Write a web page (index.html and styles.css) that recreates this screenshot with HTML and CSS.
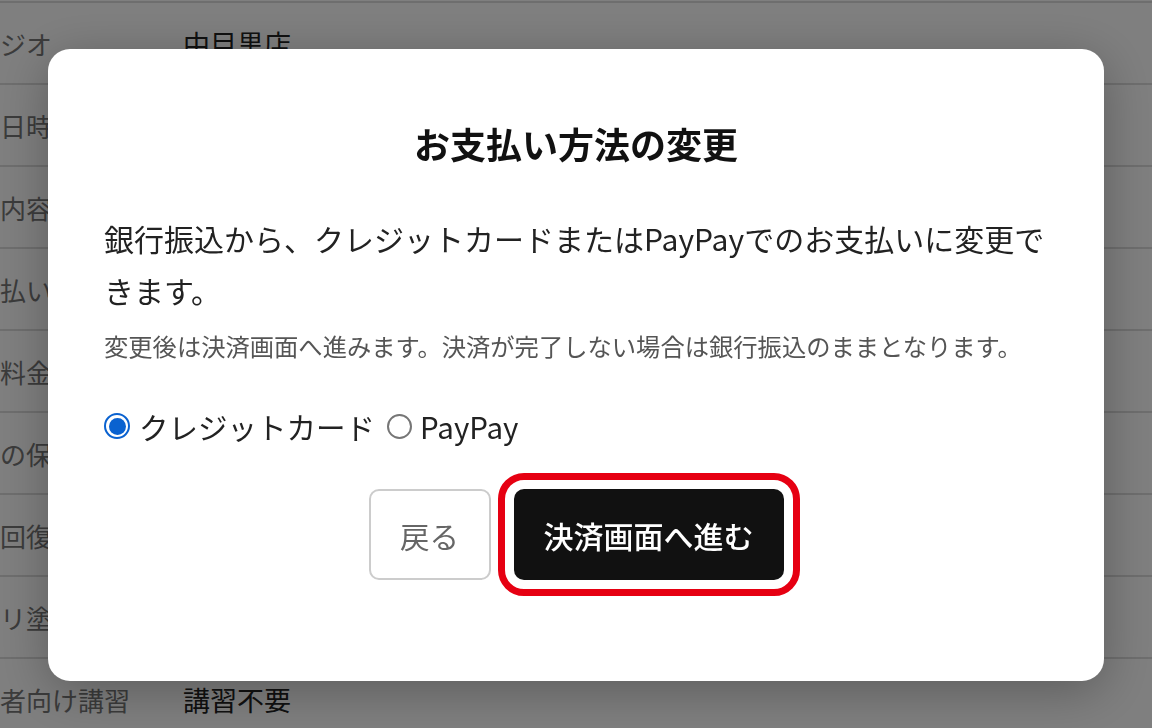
FILE: index.html
```html
<!DOCTYPE html>
<html lang="ja">
<head>
<meta charset="utf-8">
<title>お支払い方法の変更</title>
<link rel="stylesheet" href="styles.css">
</head>
<body>
<div class="page">
  <div class="rows">
    <div class="row"><span class="label">ジオ</span><span class="value">中目黒店</span></div>
    <div class="row"><span class="label">日時</span><span class="value"></span></div>
    <div class="row"><span class="label">内容</span><span class="value"></span></div>
    <div class="row"><span class="label">払い</span><span class="value"></span></div>
    <div class="row"><span class="label">料金</span><span class="value"></span></div>
    <div class="row"><span class="label">の保</span><span class="value"></span></div>
    <div class="row"><span class="label">回復</span><span class="value"></span></div>
    <div class="row"><span class="label">リ塗</span><span class="value"></span></div>
    <div class="row"><span class="label">者向け講習</span><span class="value">講習不要</span></div>
  </div>
</div>

<div class="overlay">
  <div class="modal">
    <h2 class="title">お支払い方法の変更</h2>
    <p class="lead">銀行振込から、クレジットカードまたはPayPayでのお支払いに変更できます。</p>
    <p class="note">変更後は決済画面へ進みます。決済が完了しない場合は銀行振込のままとなります。</p>
    <div class="options">
      <label class="option"><span class="radio checked"></span><span class="opt-text">クレジットカード</span></label>
      <label class="option"><span class="radio"></span><span class="opt-text">PayPay</span></label>
    </div>
    <div class="actions">
      <button class="btn btn-back">戻る</button>
      <button class="btn btn-primary">決済画面へ進む</button>
    </div>
  </div>
</div>
</body>
</html>
```

FILE: styles.css
```css
html, body {
  margin: 0;
  padding: 0;
  background: #ffffff;
  font-family: "Noto Sans CJK JP", "Noto Sans", sans-serif;
  overflow: hidden;
  height: 728px;
}

.page {
  width: 1152px;
  height: 728px;
}

.rows {
  padding-top: 1px;
}

.row {
  display: grid;
  grid-template-columns: 183px 1fr;
  align-items: center;
  height: 80px;
  border-top: 2px solid #dcdcdc;
}

.label {
  margin-left: 0;
  font-size: 26px;
  color: #777777;
  white-space: nowrap;
}

.value {
  font-size: 27px;
  color: #222222;
}

.overlay {
  position: fixed;
  inset: 0;
  background: rgba(0, 0, 0, 0.5);
}

.modal {
  position: absolute;
  left: 48px;
  top: 49px;
  width: 1056px;
  height: 632px;
  box-sizing: border-box;
  padding: 67px 56px 0 56px;
  background: #ffffff;
  border-radius: 22px;
  box-shadow: 0 10px 50px rgba(0, 0, 0, 0.28);
}

.title {
  margin: 0;
  font-size: 36px;
  line-height: 54px;
  font-weight: 700;
  text-align: center;
  color: #111111;
}

.lead {
  margin: 42px 0 0 0;
  font-size: 30px;
  line-height: 52px;
  color: #222222;
}

.note {
  margin: 12px 0 0 0;
  font-size: 24.3px;
  line-height: 36px;
  color: #555555;
}

.options {
  display: flex;
  align-items: center;
  margin-top: 44px;
  height: 36px;
}

.option {
  display: flex;
  align-items: center;
  margin-right: 12px;
}

.radio {
  box-sizing: border-box;
  width: 25px;
  height: 25px;
  border: 2px solid #767676;
  border-radius: 50%;
  margin-right: 8px;
  position: relative;
}

.radio.checked {
  width: 26px;
  height: 26px;
  border: 2.5px solid #0a62d0;
  margin-right: 9px;
}

.radio.checked::after {
  content: "";
  position: absolute;
  inset: 2.5px;
  border-radius: 50%;
  background: #0a62d0;
}

.opt-text {
  font-size: 29.5px;
  line-height: 36px;
  color: #222222;
}

.actions {
  display: flex;
  justify-content: center;
  gap: 23px;
  margin-top: 45px;
}

.btn {
  height: 91px;
  border-radius: 10px;
  font-family: "Noto Sans CJK JP", "Noto Sans", sans-serif;
  font-size: 29.5px;
  box-sizing: border-box;
  cursor: pointer;
}

.btn-back {
  width: 122px;
  background: #ffffff;
  border: 2px solid #cccccc;
  color: #666666;
}

.btn-primary {
  width: 270px;
  background: #111111;
  border: none;
  color: #ffffff;
  font-size: 30px;
  font-weight: 500;
  outline: 7px solid #e60012;
  outline-offset: 9px;
}
```
